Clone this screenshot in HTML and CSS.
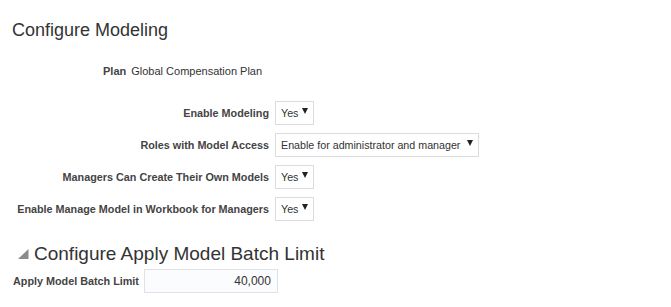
FILE: index.html
```html
<!DOCTYPE html>
<html lang="en">
  <head>
    <meta charset="UTF-8" />
    <meta name="viewport" content="width=device-width, initial-scale=1.0" />
    <title>Configure Modeling</title>
    <link rel="stylesheet" href="styles.css">
  </head>

  <body>
    <div class="page">
      <h1 class="title">Configure Modeling</h1>
      <div class="plan">
        <span class="plan-label">Plan</span>
        <span class="plan-value">Global Compensation Plan</span>
      </div>
      <form class="settings">
        <label class="field-label">Enable Modeling</label>
        <div class="select small"><span>Yes</span><i class="arrow"></i></div>
        <label class="field-label">Roles with Model Access</label>
        <div class="select wide"><span>Enable for administrator and manager</span><i class="arrow"></i></div>
        <label class="field-label">Managers Can Create Their Own Models</label>
        <div class="select small"><span>Yes</span><i class="arrow"></i></div>
        <label class="field-label">Enable Manage Model in Workbook for Managers</label>
        <div class="select small"><span>Yes</span><i class="arrow"></i></div>
      </form>
      <h2 class="section">
        <svg class="disclosure" width="11" height="10" viewBox="0 0 11 10">
          <polygon points="10.5,0 10.5,10 0,10" fill="#8c8c8c" />
        </svg>
        Configure Apply Model Batch Limit
      </h2>
      <div class="limit">
        <label class="field-label">Apply Model Batch Limit</label>
        <input class="number" value="40,000" />
      </div>
    </div>
  </body>
</html>
```

FILE: styles.css
```css
html {
  background-color: #fff;
}
body {
  margin: 0;
  font-family: "Liberation Sans", Arial, sans-serif;
  color: #333;
}
.page {
  padding: 18px 12px 0 12px;
}
.title {
  margin: 0;
  font-size: 18px;
  font-weight: normal;
  line-height: 24px;
}
.plan {
  display: flex;
  gap: 5px;
  margin-top: 22px;
  padding-left: 91px;
  font-size: 11px;
  line-height: 14px;
}
.plan-label {
  font-weight: bold;
  color: #444;
}
.settings {
  display: grid;
  grid-template-columns: 257px auto;
  justify-content: start;
  align-items: center;
  column-gap: 6px;
  row-gap: 8px;
  margin-top: 23px;
}
.field-label {
  text-align: right;
  font-size: 10.8px;
  font-weight: bold;
  color: #444;
}
.select {
  display: flex;
  align-items: center;
  justify-content: space-between;
  box-sizing: border-box;
  height: 24px;
  padding: 0 5px 0 5px;
  border: 1px solid #dcdcdc;
  background: #fff;
  font-size: 10.7px;
  white-space: nowrap;
}
.select.small {
  width: 39px;
}
.select.wide {
  width: 204px;
}
.arrow {
  width: 0;
  height: 0;
  margin-top: -4px;
  border-left: 3px solid transparent;
  border-right: 3px solid transparent;
  border-top: 6px solid #222;
}
.section {
  display: flex;
  align-items: center;
  gap: 5px;
  margin: 21px 0 0 6px;
  font-size: 19px;
  font-weight: normal;
  line-height: 24px;
}
.limit {
  display: flex;
  align-items: center;
  gap: 5px;
  margin-top: 3px;
  padding-left: 1px;
}
.number {
  box-sizing: border-box;
  width: 134px;
  height: 24px;
  padding: 0 6px;
  border: 1px solid #dfe3e8;
  background: #fbfcfd;
  font-family: "Liberation Sans", Arial, sans-serif;
  font-size: 12px;
  color: #333;
  text-align: right;
}
```
